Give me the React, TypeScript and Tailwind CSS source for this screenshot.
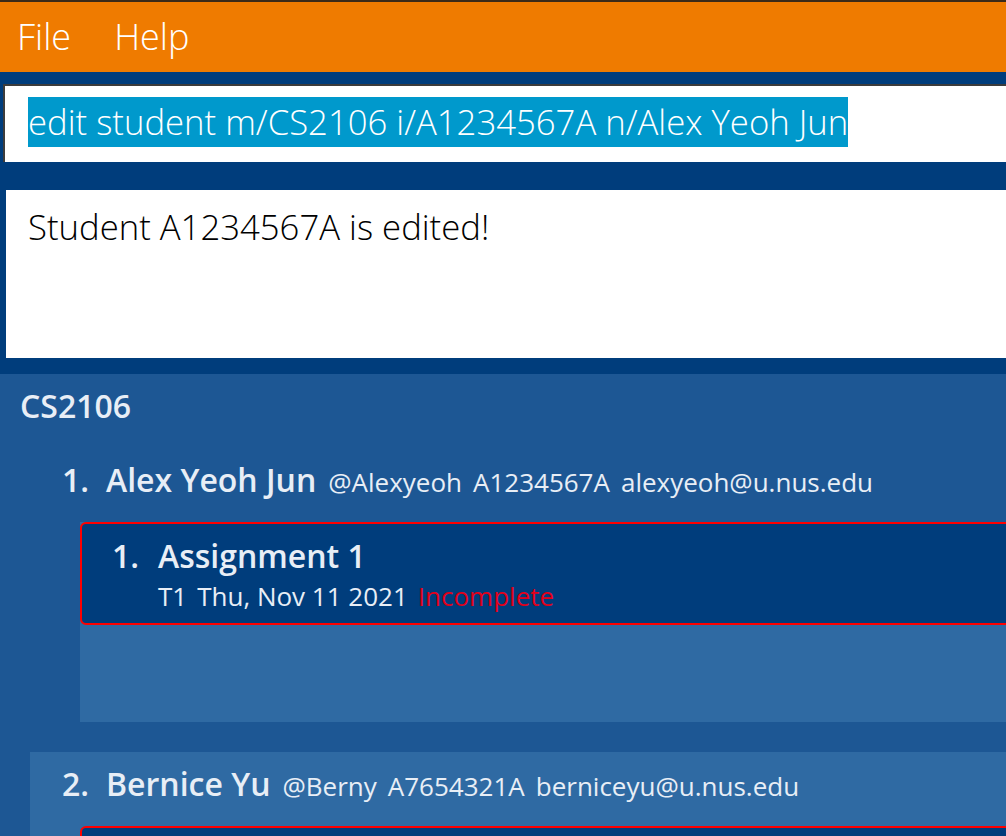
import React from "react";

const FONT = "font-['Open_Sans','Noto_Sans',sans-serif]";

function AssignmentCard() {
  return (
    <div className="h-[103px] rounded-[6px] border-2 border-[#ff0000] bg-[#003d7c] pl-[30px] pt-[10px]">
      <div className="flex items-baseline text-[32px] font-semibold leading-[44px] text-[#e8eef6]">
        <span className="w-[46px]">1.</span>
        <span>Assignment 1</span>
      </div>
      <div className="mt-[2px] flex items-baseline gap-[10px] pl-[46px] text-[26px] leading-[32px] text-[#e8eef6]">
        <span>T1</span>
        <span>Thu, Nov 11 2021</span>
        <span className="text-[#e2001a]">Incomplete</span>
      </div>
    </div>
  );
}

function StudentCell({
  idx,
  name,
  tele,
  id,
  email,
  light,
}: {
  idx: number;
  name: string;
  tele: string;
  id: string;
  email: string;
  light?: boolean;
}) {
  return (
    <div className={`ml-[30px] w-[1100px] ${light ? "bg-[#2f6aa3]" : "bg-[#1d5794]"}`}>
      <div className="flex h-[74px] items-baseline pl-[32px] pt-[11px] text-[#e8eef6]">
        <span className="w-[44px] text-[32px] font-semibold leading-[42px]">{idx}.</span>
        <span className="text-[32px] font-semibold leading-[42px]">{name}</span>
        <span className="ml-[12px] text-[26px]">{tele}</span>
        <span className="ml-[11px] text-[26px]">{id}</span>
        <span className="ml-[11px] text-[26px]">{email}</span>
      </div>
      <div className="ml-[50px] h-[200px] bg-[#2f6aa3]">
        <AssignmentCard />
      </div>
    </div>
  );
}

export default function App() {
  return (
    <div className={`w-[1006px] h-[836px] overflow-hidden bg-[#1d5794] ${FONT}`}>
      <div className="h-[2px] bg-[#3b2a18]" />
      <div className="flex h-[70px] items-center gap-[43px] bg-[#ef7b00] px-[17px] text-[36px] font-light leading-[70px] text-white">
        <span>File</span>
        <span>Help</span>
      </div>
      <div className="bg-[#003d7c] pt-[12px] pb-[16px]">
        <div className="ml-[3px] h-[78px] border-l-2 border-t-2 border-[#3c3c3c] bg-white pl-[23px] pt-[11px]">
          <span className="inline-block bg-[#0099cc] text-[34.7px] font-light leading-[50px] text-white">
            edit student m/CS2106 i/A1234567A n/Alex Yeoh Jun
          </span>
        </div>
        <div className="ml-[6px] mt-[28px] h-[168px] bg-white pl-[22px] pt-[11px] text-[34.7px] font-light leading-normal text-black">
          Student A1234567A is edited!
        </div>
      </div>
      <div className="pl-[20px] pt-[10px] text-[32px] font-semibold leading-[44px] text-[#e8eef6]">
        CS2106
      </div>
      <div className="mt-[20px] flex flex-col gap-[30px]">
        <StudentCell
          idx={1}
          name="Alex Yeoh Jun"
          tele="@Alexyeoh"
          id="A1234567A"
          email="alexyeoh@u.nus.edu"
        />
        <StudentCell
          idx={2}
          name="Bernice Yu"
          tele="@Berny"
          id="A7654321A"
          email="berniceyu@u.nus.edu"
          light
        />
      </div>
    </div>
  );
}
